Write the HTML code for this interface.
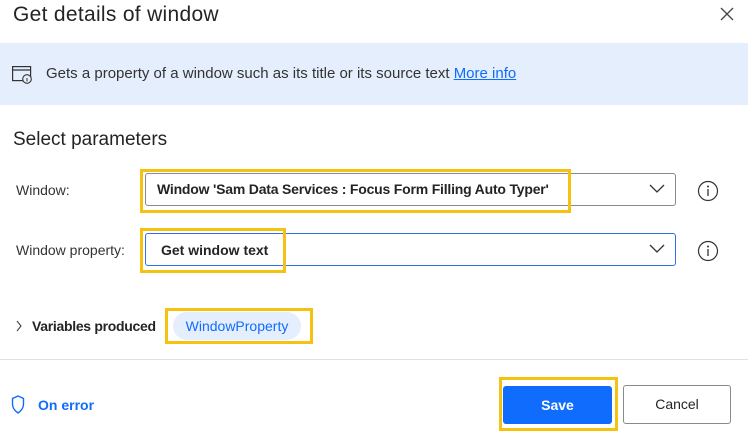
<!DOCTYPE html>
<html><head><style>
body{margin:0;width:748px;height:437px;background:#fff;font-family:"Liberation Sans",sans-serif;color:#242424;position:relative;overflow:hidden}
.a{position:absolute}
.dd{position:absolute;left:145px;width:531px;height:33px;border:1px solid #8a8a8a;border-radius:3px;box-sizing:border-box}
.y{position:absolute;border:3px solid #f5c211;box-sizing:border-box}
.chev{position:absolute;right:10px;top:9px}
</style></head><body>
<div class="a" style="left:13px;top:3px;font-size:21px;letter-spacing:0.3px">Get details of window</div>
<svg class="a" style="left:720px;top:7px" width="14" height="14"><path d="M1 1L13 13M13 1L1 13" stroke="#444" stroke-width="1.3"/></svg>
<div class="a" style="left:0;top:43px;width:748px;height:62px;background:#e5eefd"></div>
<svg class="a" style="left:12px;top:66px" width="21" height="18"><rect x="0.6" y="0.6" width="18" height="14" fill="none" stroke="#333" stroke-width="1.2"/><line x1="0.6" y1="4" x2="18.6" y2="4" stroke="#333" stroke-width="1.2"/><circle cx="15" cy="13" r="4.3" fill="#e5eefd" stroke="#333" stroke-width="1.1"/><line x1="15" y1="12" x2="15" y2="15.5" stroke="#333"/></svg>
<div class="a" style="left:46px;top:65px;font-size:15px;color:#333">Gets a property of a window such as its title or its source text <span style="color:#0f6cfd;text-decoration:underline">More info</span></div>
<div class="a" style="left:13px;top:129px;font-size:19px">Select parameters</div>
<div class="a" style="left:16px;top:182px;font-size:14px;color:#333">Window:</div>
<div class="dd" style="top:173px"><svg class="chev" width="16" height="12"><path d="M1 2L8 9L15 2" fill="none" stroke="#333" stroke-width="1.3"/></svg></div>
<div class="a" style="left:157px;top:181px;font-size:14px;font-weight:bold;letter-spacing:-0.2px">Window 'Sam Data Services : Focus Form Filling Auto Typer'</div>
<div class="y" style="left:140px;top:169px;width:431px;height:44px"></div>
<svg class="a" style="left:697px;top:180px" width="22" height="22"><circle cx="11" cy="11" r="9.5" fill="none" stroke="#333" stroke-width="1.2"/><circle cx="11" cy="6.5" r="1" fill="#333"/><line x1="11" y1="9" x2="11" y2="16" stroke="#333" stroke-width="1.3"/></svg>
<div class="a" style="left:16px;top:242px;font-size:14px;color:#333">Window property:</div>
<div class="dd" style="top:233px;border-color:#2f6ff0"><svg class="chev" width="16" height="12"><path d="M1 2L8 9L15 2" fill="none" stroke="#333" stroke-width="1.3"/></svg></div>
<div class="a" style="left:161px;top:242px;font-size:14px;font-weight:bold">Get window text</div>
<div class="y" style="left:140px;top:228px;width:146px;height:45px"></div>
<svg class="a" style="left:697px;top:240px" width="22" height="22"><circle cx="11" cy="11" r="9.5" fill="none" stroke="#333" stroke-width="1.2"/><circle cx="11" cy="6.5" r="1" fill="#333"/><line x1="11" y1="9" x2="11" y2="16" stroke="#333" stroke-width="1.3"/></svg>
<svg class="a" style="left:15px;top:320px" width="8" height="12"><path d="M2 1L6 6L2 11" fill="none" stroke="#444" stroke-width="1.1"/></svg>
<div class="a" style="left:32px;top:318px;font-size:14px;font-weight:bold;letter-spacing:-0.3px;color:#242424">Variables produced</div>
<div class="a" style="left:173px;top:312px;width:128px;height:28px;border-radius:14px;background:#e5eefd;color:#0f6cfd;font-size:14px;line-height:28px;text-align:center">WindowProperty</div>
<div class="y" style="left:165px;top:308px;width:148px;height:36px"></div>
<div class="a" style="left:0;top:359px;width:748px;height:1px;background:#e0e0e0"></div>
<svg class="a" style="left:11px;top:395px" width="14" height="20"><path d="M7 1L1.5 3.5V9C1.5 13 4 16 7 18C10 16 12.5 13 12.5 9V3.5Z" fill="none" stroke="#0f6cfd" stroke-width="1.4"/></svg>
<div class="a" style="left:38px;top:397px;font-size:14px;font-weight:bold;color:#0f6cfd">On error</div>
<div class="a" style="left:503px;top:386px;width:109px;height:38px;background:#0f6cfd;border-radius:3px;color:#fff;font-size:14px;font-weight:bold;line-height:38px;text-align:center">Save</div>
<div class="y" style="left:499px;top:377px;width:119px;height:54px"></div>
<div class="a" style="left:623px;top:385px;width:108px;height:39px;border:1px solid #8a8a8a;border-radius:3px;box-sizing:border-box;font-size:14px;line-height:37px;text-align:center">Cancel</div>
</body></html>
